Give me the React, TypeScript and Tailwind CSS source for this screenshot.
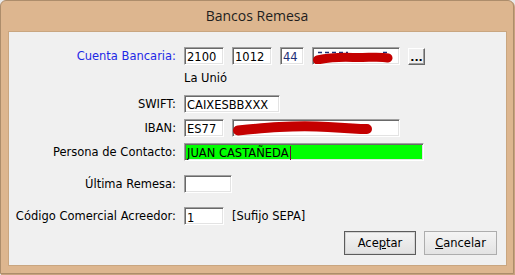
const ui = { fontFamily: '"DejaVu Sans", Verdana, sans-serif' };

function Field({
  w,
  children,
  className = "bg-white",
}: {
  w: string;
  children?: React.ReactNode;
  className?: string;
}) {
  return (
    <div
      className={`relative h-[18px] ${w} border border-t-[#a0a0a0] border-l-[#a0a0a0] border-r-white border-b-white shadow-[inset_1px_1px_0_#696969,inset_-1px_-1px_0_#e3e3e3] flex items-center pl-[2px] pt-[1px] overflow-hidden whitespace-nowrap ${className}`}
    >
      {children}
    </div>
  );
}

function Row({ label, blue, children, className = "" }: { label: string; blue?: boolean; children: React.ReactNode; className?: string }) {
  return (
    <div className={`flex items-center ${className}`}>
      <div className={`w-[167px] text-right ${blue ? "text-[#1e28e6]" : "text-black"}`}>{label}</div>
      <div className="ml-2 flex items-center gap-2">{children}</div>
    </div>
  );
}

export default function App() {
  return (
    <div className="w-[515px] h-[275px] bg-[#e9e9e9]">
      <div className="w-[514px] h-[274px] bg-[#ddb68f] border border-[#ad8d6b] rounded-t-[6px] flex flex-col shadow-[1px_1px_0_#c8a27e]">
        {/* title bar */}
        <div
          className="h-[30px] flex items-center justify-center pb-[2px] text-[14px] text-[#1e1e1e]"
          style={{ fontFamily: '"Open Sans", sans-serif' }}
        >
          Bancos Remesa
        </div>

        {/* client area */}
        <div
          className="ml-[7px] w-[499px] h-[235px] bg-[#f0f0f0] border border-[#c9a680] text-[11.5px] leading-[14px] pt-[15px] flex flex-col"
          style={ui}
        >
          <Row label="Cuenta Bancaria:" blue>
            <Field w="w-[40px]">2100</Field>
            <Field w="w-[40px]">1012</Field>
            <Field w="w-[24px]" className="bg-white text-[#1c2f78]">44</Field>
            <Field w="w-[88px]">
              {/* redacted account number */}
              <svg className="absolute left-0 top-0" width="88" height="18" viewBox="0 0 88 18">
                <path d="M5 4.5 h 30 M 70 4.5 h 5" stroke="#1c2f78" strokeWidth="1.5" strokeDasharray="4 3" fill="none" />
                <path
                  d="M4.5 12 C 14 10, 26 9, 40 9.5 S 66 8, 75 10"
                  stroke="#c40000"
                  strokeWidth="9"
                  strokeLinecap="round"
                  fill="none"
                />
              </svg>
            </Field>
            <div className="h-[17px] w-[17px] bg-[#f0f0f0] border border-t-white border-l-white border-r-[#696969] border-b-[#696969] shadow-[inset_-1px_-1px_0_#a0a0a0] flex items-end justify-center pb-[1px] text-[11px] font-bold leading-[10px]">
              ...
            </div>
          </Row>

          <div className="mt-[6px] ml-[175px] h-[14px] text-black">La Unió</div>

          <Row label="SWIFT:" className="mt-[10px]">
            <Field w="w-[96px]">CAIXESBBXXX</Field>
          </Row>

          <Row label="IBAN:" className="mt-[6px]">
            <Field w="w-[40px]">ES77</Field>
            <Field w="w-[168px]">
              {/* redacted IBAN */}
              <svg className="absolute left-0 top-0" width="168" height="18" viewBox="0 0 168 18">
                <path
                  d="M5 10.5 C 30 8, 60 5, 95 7 S 125 9, 134 9"
                  stroke="#c40000"
                  strokeWidth="10"
                  strokeLinecap="round"
                  fill="none"
                />
              </svg>
            </Field>
          </Row>

          <Row label="Persona de Contacto:" className="mt-[6px]">
            <Field w="w-[240px]" className="bg-[#00ff00]">
              JUAN CASTAÑEDA
              <span className="inline-block w-px h-[14px] bg-[#6a0a3a] ml-px" />
            </Field>
          </Row>

          <Row label="Última Remesa:" className="mt-[14px]">
            <Field w="w-[48px]" />
          </Row>

          <Row label="Código Comercial Acreedor:" className="mt-[14px]">
            <Field w="w-[40px]">
              <span className="mt-[3px]">1</span>
            </Field>
            <span>[Sufijo SEPA]</span>
          </Row>

          <div className="mt-[6px] pr-[9px] flex justify-end gap-2">
            <button className="w-[72px] h-[24px] border border-[#5c5c5c] shadow-[inset_0_0_0_1px_#d4d4d4] bg-linear-to-b from-[#f4f4f4] to-[#e1e1e1] text-black">
              Ace<span className="underline">p</span>tar
            </button>
            <button className="w-[73px] h-[24px] border border-[#adadad] bg-linear-to-b from-[#f4f4f4] to-[#e3e3e3] text-black">
              <span className="underline">C</span>ancelar
            </button>
          </div>
        </div>
      </div>
    </div>
  );
}
